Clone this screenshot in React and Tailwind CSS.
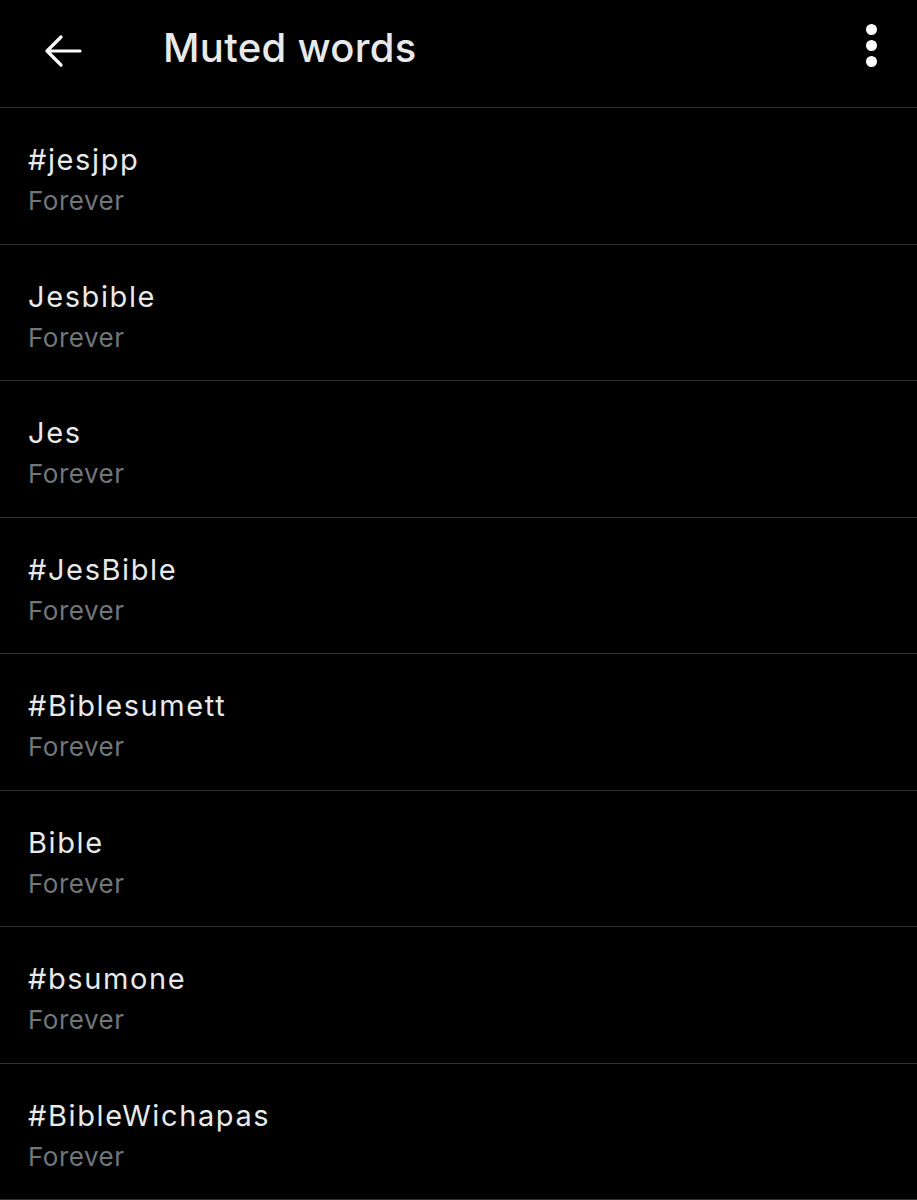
const words = [
  '#jesjpp',
  'Jesbible',
  'Jes',
  '#JesBible',
  '#Biblesumett',
  'Bible',
  '#bsumone',
  '#BibleWichapas',
];

export default function App() {
  return (
    <div className="min-h-[1200px] w-[917px] bg-black text-[#e7e9ea] font-['Inter',sans-serif] overflow-hidden">
      <header className="h-[108px] flex items-center border-b border-[#2f3336]">
        <button className="w-[126px] h-full flex items-center pl-[44px] pb-[6px]">
          <svg width="38" height="34" viewBox="0 0 38 34" fill="none" stroke="#fff" strokeWidth="3.2" strokeLinecap="round" strokeLinejoin="round">
            <path d="M36 17H3M17 3L3 17l14 14" />
          </svg>
        </button>
        <h1 className="flex-1 pl-[37px] text-[40px] font-medium tracking-[0.3px] leading-none pb-[12px]">Muted words</h1>
        <button className="w-[90px] h-full flex items-center justify-center pr-[1px] pb-[16px]">
          <div className="flex flex-col gap-[5.5px]">
            <span className="block w-[10.5px] h-[10.5px] rounded-full bg-white" />
            <span className="block w-[10.5px] h-[10.5px] rounded-full bg-white" />
            <span className="block w-[10.5px] h-[10.5px] rounded-full bg-white" />
          </div>
        </button>
      </header>
      {words.map((w) => (
        <div key={w} className="h-[136.5px] border-b border-[#2f3336] px-[28px] pt-[34px]">
          <div className="text-[29px] leading-[36px] tracking-[1.6px] text-[#e7e9ea]">{w}</div>
          <div className="text-[26px] leading-[36px] tracking-[0.5px] text-[#71767b] mt-[5px]">Forever</div>
        </div>
      ))}
    </div>
  );
}
